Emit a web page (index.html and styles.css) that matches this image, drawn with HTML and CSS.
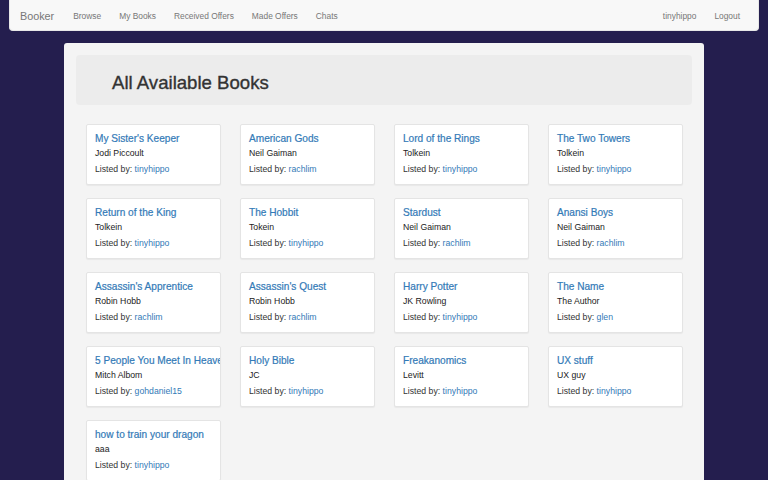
FILE: index.html
```html
<!DOCTYPE html>
<html>
<head>
<meta charset="utf-8">
<title>Booker</title>
<link rel="stylesheet" href="styles.css">
</head>
<body>
<nav class="navbar">
  <a class="brand" href="#">Booker</a>
  <ul class="nav">
    <li><a href="#">Browse</a></li>
    <li><a href="#">My Books</a></li>
    <li><a href="#">Received Offers</a></li>
    <li><a href="#">Made Offers</a></li>
    <li><a href="#">Chats</a></li>
  </ul>
  <ul class="nav nav-right">
    <li><a href="#">tinyhippo</a></li>
    <li><a href="#">Logout</a></li>
  </ul>
</nav>
<main class="container">
  <div class="jumbotron"><h1>All Available Books</h1></div>
  <div class="grid">
    <div class="card"><a class="title" href="#">My Sister's Keeper</a><div class="author">Jodi Piccoult</div><div class="listed">Listed by: <a href="#">tinyhippo</a></div></div>
    <div class="card"><a class="title" href="#">American Gods</a><div class="author">Neil Gaiman</div><div class="listed">Listed by: <a href="#">rachlim</a></div></div>
    <div class="card"><a class="title" href="#">Lord of the Rings</a><div class="author">Tolkein</div><div class="listed">Listed by: <a href="#">tinyhippo</a></div></div>
    <div class="card"><a class="title" href="#">The Two Towers</a><div class="author">Tolkein</div><div class="listed">Listed by: <a href="#">tinyhippo</a></div></div>
    <div class="card"><a class="title" href="#">Return of the King</a><div class="author">Tolkein</div><div class="listed">Listed by: <a href="#">tinyhippo</a></div></div>
    <div class="card"><a class="title" href="#">The Hobbit</a><div class="author">Tokein</div><div class="listed">Listed by: <a href="#">tinyhippo</a></div></div>
    <div class="card"><a class="title" href="#">Stardust</a><div class="author">Neil Gaiman</div><div class="listed">Listed by: <a href="#">rachlim</a></div></div>
    <div class="card"><a class="title" href="#">Anansi Boys</a><div class="author">Neil Gaiman</div><div class="listed">Listed by: <a href="#">rachlim</a></div></div>
    <div class="card"><a class="title" href="#">Assassin's Apprentice</a><div class="author">Robin Hobb</div><div class="listed">Listed by: <a href="#">rachlim</a></div></div>
    <div class="card"><a class="title" href="#">Assassin's Quest</a><div class="author">Robin Hobb</div><div class="listed">Listed by: <a href="#">rachlim</a></div></div>
    <div class="card"><a class="title" href="#">Harry Potter</a><div class="author">JK Rowling</div><div class="listed">Listed by: <a href="#">tinyhippo</a></div></div>
    <div class="card"><a class="title" href="#">The Name</a><div class="author">The Author</div><div class="listed">Listed by: <a href="#">glen</a></div></div>
    <div class="card"><a class="title" href="#">5 People You Meet In Heaven</a><div class="author">Mitch Albom</div><div class="listed">Listed by: <a href="#">gohdaniel15</a></div></div>
    <div class="card"><a class="title" href="#">Holy Bible</a><div class="author">JC</div><div class="listed">Listed by: <a href="#">tinyhippo</a></div></div>
    <div class="card"><a class="title" href="#">Freakanomics</a><div class="author">Levitt</div><div class="listed">Listed by: <a href="#">tinyhippo</a></div></div>
    <div class="card"><a class="title" href="#">UX stuff</a><div class="author">UX guy</div><div class="listed">Listed by: <a href="#">tinyhippo</a></div></div>
    <div class="card"><a class="title" href="#">how to train your dragon</a><div class="author">aaa</div><div class="listed">Listed by: <a href="#">tinyhippo</a></div></div>
  </div>
</main>
</body>
</html>
```

FILE: styles.css
```css
* { box-sizing: border-box; }
html, body {
  margin: 0;
  padding: 0;
  background: #241e4e;
  font-family: "Liberation Sans", Arial, sans-serif;
  color: #333;
  height: 480px;
  overflow: hidden;
}
a { text-decoration: none; }

.navbar {
  margin: 0 9px;
  height: 31px;
  background: #f8f8f8;
  border: 1px solid #e7e7e7;
  border-top: none;
  border-radius: 0 0 4px 4px;
  display: flex;
  align-items: center;
  padding: 1px 9px 0 10px;
}
.brand {
  font-size: 10.8px;
  color: #777;
  margin-right: 10px;
}
.nav {
  list-style: none;
  margin: 0;
  padding: 0;
  display: flex;
}
.nav a {
  display: block;
  font-size: 8.4px;
  color: #777;
  padding: 0 9px;
}
.nav-right { margin-left: auto; }

.container {
  width: 640px;
  margin: 12px 0 0 64px;
  background: #f4f4f4;
  border-radius: 3px 3px 0 0;
  padding: 12px 12px 0;
  min-height: 500px;
}
.jumbotron {
  background: #ececec;
  border-radius: 4px;
  height: 50px;
  padding: 5px 36px 0;
  display: flex;
  align-items: center;
}
.jumbotron h1 {
  margin: 0;
  font-size: 18.6px;
  font-weight: normal;
  color: #333;
  -webkit-text-stroke: 0.35px #333;
}

.grid {
  display: grid;
  grid-template-columns: repeat(4, 1fr);
  column-gap: 19px;
  row-gap: 13px;
  padding: 19px 9px 0 10px;
}
.card {
  background: #fff;
  border: 1px solid #e4e4e4;
  border-radius: 2px;
  box-shadow: 0 1px 1px rgba(0,0,0,0.05);
  padding: 6px 8px 8px;
  height: 61px;
  overflow: hidden;
}
.title {
  display: block;
  font-size: 10.1px;
  line-height: 15px;
  color: #337ab7;
  white-space: nowrap;
  -webkit-text-stroke: 0.2px #337ab7;
}
.author {
  font-size: 8.7px;
  line-height: 14px;
  color: #222;
}
.listed {
  font-size: 8.7px;
  line-height: 14px;
  margin-top: 2px;
  color: #333;
}
.listed a { color: #337ab7; }
```
